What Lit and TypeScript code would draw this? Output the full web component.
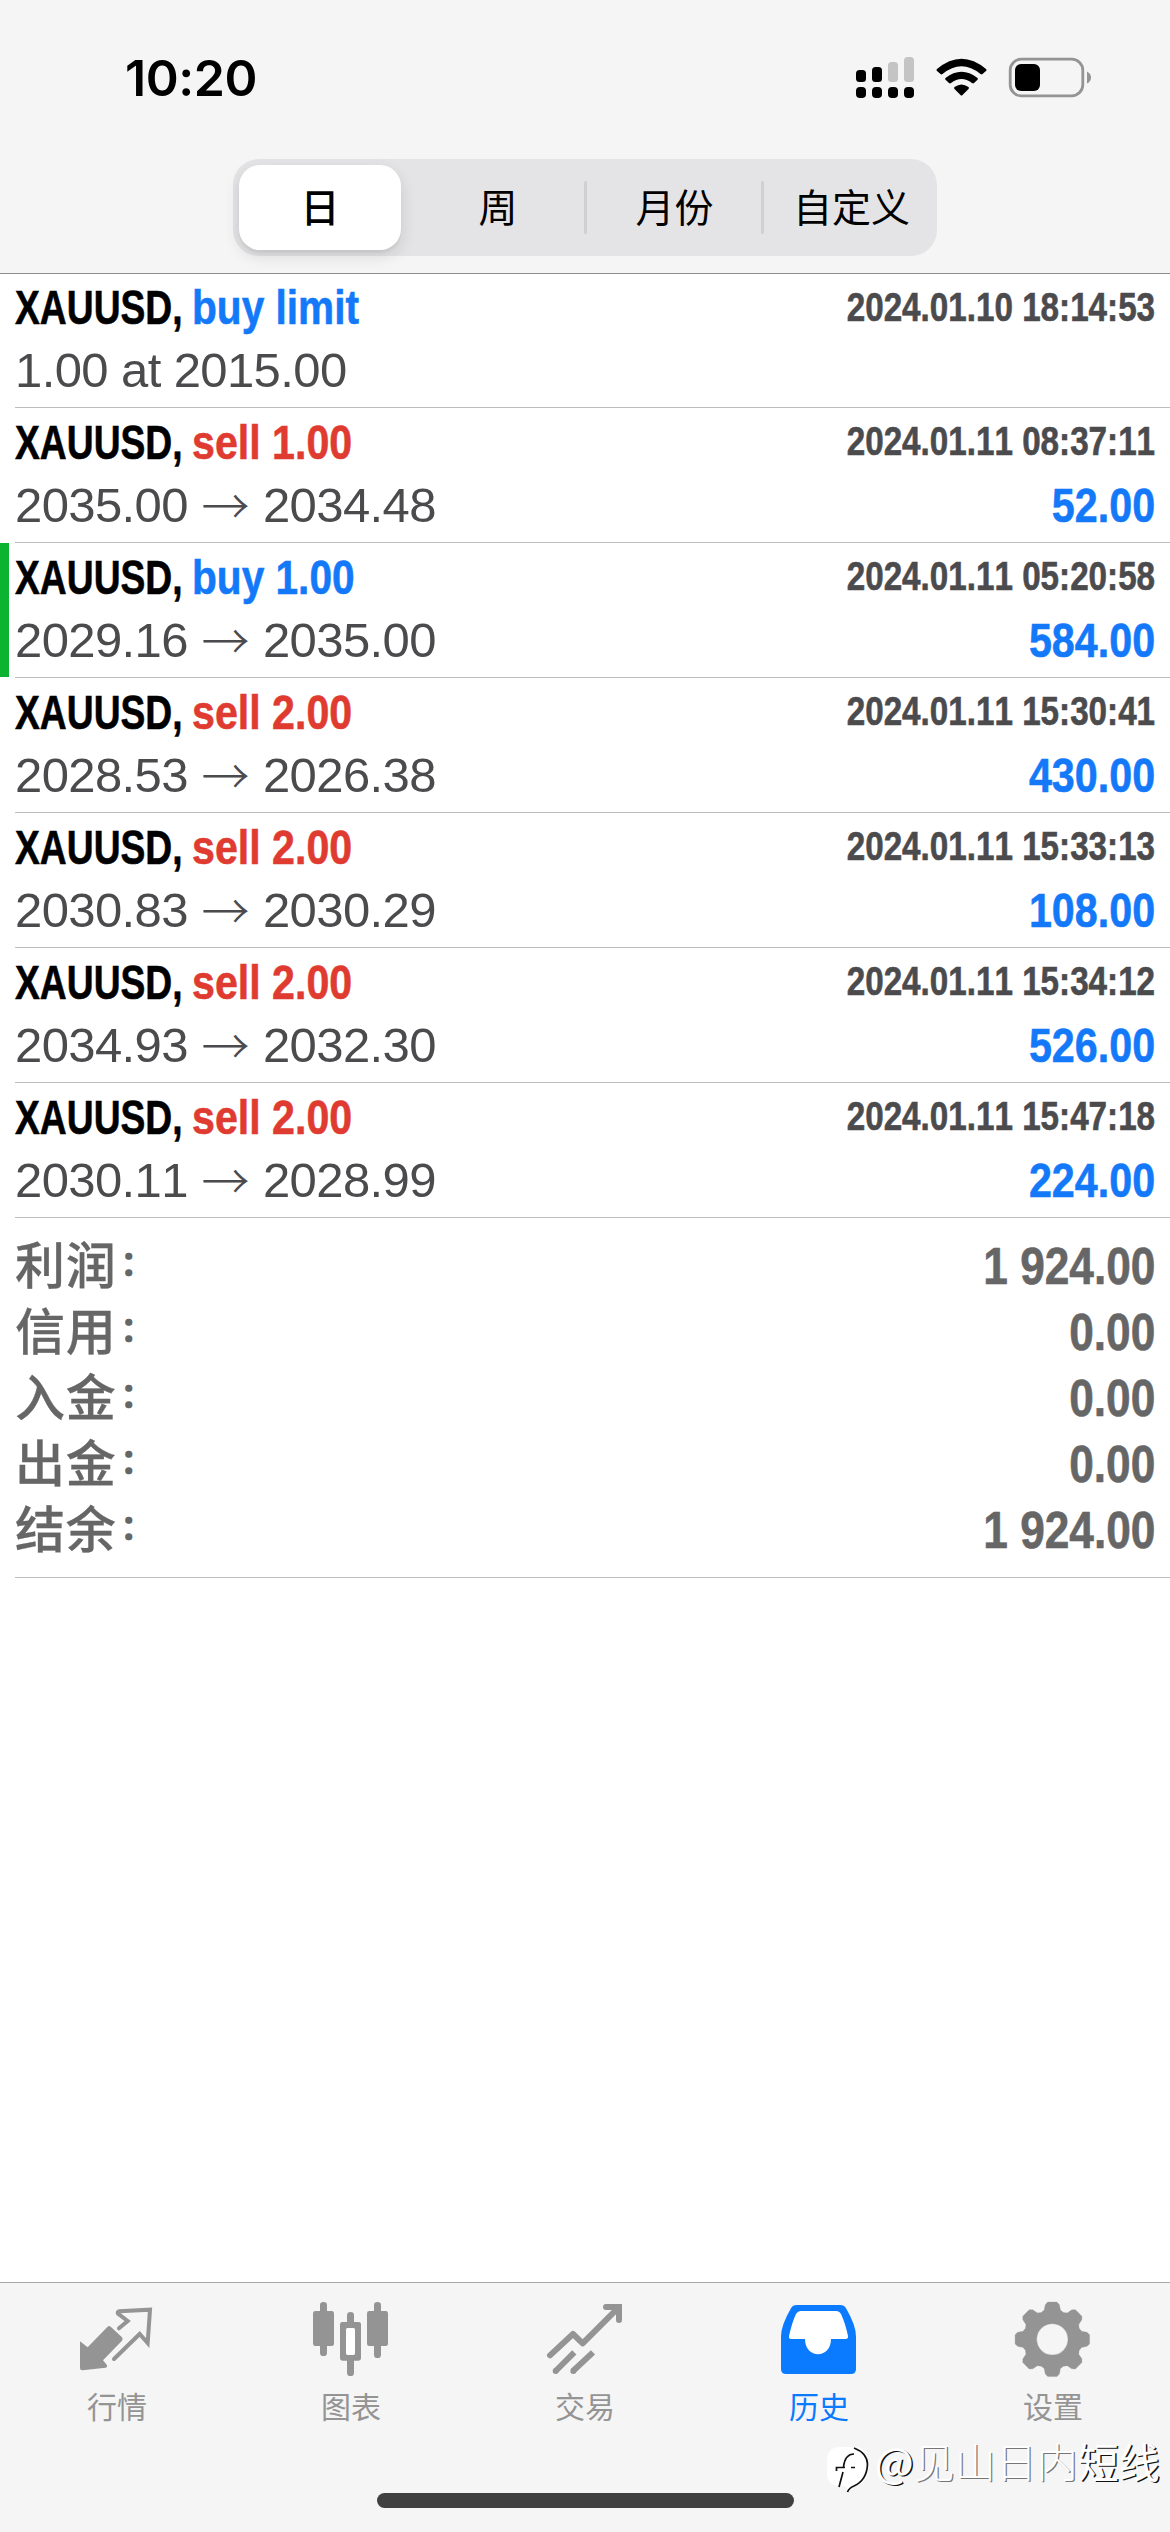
import { LitElement, html, css, svg, nothing } from "lit";
import { customElement } from "lit/decorators.js";
import { classMap } from "lit/directives/class-map.js";

interface Deal {
  side: "buy" | "sell";
  action: string;
  detail: string[];
  time: string;
  profit?: string;
  marked?: boolean;
}

const DEALS: Deal[] = [
  { side: "buy", action: "buy limit", detail: ["1.00 at 2015.00"], time: "2024.01.10 18:14:53" },
  { side: "sell", action: "sell 1.00", detail: ["2035.00", "2034.48"], time: "2024.01.11 08:37:11", profit: "52.00" },
  { side: "buy", action: "buy 1.00", detail: ["2029.16", "2035.00"], time: "2024.01.11 05:20:58", profit: "584.00", marked: true },
  { side: "sell", action: "sell 2.00", detail: ["2028.53", "2026.38"], time: "2024.01.11 15:30:41", profit: "430.00" },
  { side: "sell", action: "sell 2.00", detail: ["2030.83", "2030.29"], time: "2024.01.11 15:33:13", profit: "108.00" },
  { side: "sell", action: "sell 2.00", detail: ["2034.93", "2032.30"], time: "2024.01.11 15:34:12", profit: "526.00" },
  { side: "sell", action: "sell 2.00", detail: ["2030.11", "2028.99"], time: "2024.01.11 15:47:18", profit: "224.00" },
];

const TOTALS: [string, string][] = [
  ["利润", "1 924.00"],
  ["信用", "0.00"],
  ["入金", "0.00"],
  ["出金", "0.00"],
  ["结余", "1 924.00"],
];

const RANGES = ["日", "周", "月份", "自定义"];

const gearPath = (): string => {
  const cx = 757, cy = 238;
  const pts: string[] = [];
  const profile: [number, number][] = [
    [-22.5, 87], [-15.5, 91], [-11.5, 106], [-7, 112.5], [7, 112.5], [11.5, 106], [15.5, 91],
  ];
  for (let i = 0; i < 8; i++) {
    for (const [a, r] of profile) {
      const t = ((i * 45 + a - 90) * Math.PI) / 180;
      pts.push(`${(cx + r * Math.cos(t)).toFixed(1)} ${(cy + r * Math.sin(t)).toFixed(1)}`);
    }
  }
  return `M${pts.join("L")}ZM804 238a47 47 0 1 0 -94 0a47 47 0 1 0 94 0Z`;
};

const TABS = [
  {
    label: "行情",
    box: "105 105 252 252",
    art: svg`
      <path d="M120 244L143 262L202 201Q207 196 212 200L246 232Q250 237 246 242L189 301L200 314Q204 320 197 323L128 331Q120 332 120 324Z" fill="currentColor"/>
      <path d="M237 205L263 183L234 161Q231 156 237 154L330 149L323 249L299 222L222 297" fill="none" stroke="currentColor" stroke-width="12" stroke-linecap="round"/>`,
  },
  {
    label: "图表",
    box: "807 105 252 252",
    art: svg`
      <g fill="currentColor">
        <rect x="840" y="126" width="21" height="162" rx="10"/>
        <rect x="819" y="153" width="63" height="105" rx="7"/>
        <rect x="1002" y="126" width="21" height="168" rx="10"/>
        <rect x="981" y="153" width="63" height="105" rx="7"/>
        <path d="M921 190V166Q921 156 931.500 156Q942 156 942 166V190Z"/>
        <path d="M921 298V338Q921 348 931.500 348Q942 348 942 338V298Z"/>
        <path fill-rule="evenodd" d="M907 186H956Q963 186 963 193V295Q963 302 956 302H907Q900 302 900 295V193Q900 186 907 186ZM925 204Q918 204 918 211V278Q918 285 925 285H938Q945 285 945 278V211Q945 204 938 204Z"/>
      </g>
      <rect x="918" y="204" width="27" height="81" rx="7" fill="#fff"/>`,
  },
  {
    label: "交易",
    box: "129 105 252 252",
    art: svg`
      <g fill="none" stroke="currentColor" stroke-width="18" stroke-linecap="round" stroke-linejoin="round">
        <path d="M150 286L219 222L248 250L350 148"/>
        <path d="M318 141H357V180" stroke-linejoin="miter"/>
      </g>
      <g fill="none" stroke="currentColor" stroke-width="18">
        <path d="M167 333L223 277M219 333L279 277"/>
      </g>
      <circle cx="167" cy="333" r="9" fill="currentColor"/>
      <circle cx="220" cy="333" r="9" fill="currentColor"/>
      <path d="M335 141H357V163Z" fill="currentColor"/>`,
  },
  {
    label: "历史",
    box: "831 105 252 252",
    active: true,
    art: svg`
      <path fill-rule="evenodd" fill="currentColor" d="M889 135H1021Q1032 135 1038 145Q1068 196 1068 230V327Q1068 342 1053 342H858Q843 342 843 327V230Q843 196 873 145Q879 135 889 135Z"/>
      <path fill="#fff" d="M902 153H1008Q1018 153 1023 162Q1036 190 1044 228Q1045 237 1037 237H993C993 298 915 298 915 237H873Q866 237 867 229Q875 190 888 162Q893 153 902 153Z"/>`,
  },
  {
    label: "设置",
    box: "633 105 252 252",
    art: svg`<path fill-rule="evenodd" fill="currentColor" stroke="currentColor" stroke-width="1" stroke-linejoin="round" d=${gearPath()}/>`,
  },
];

@customElement("app-root")
export class AppRoot extends LitElement {
  static styles = css`
    :host {
      display: flex;
      flex-direction: column;
      position: relative;
      width: 1170px;
      height: 2532px;
      overflow: hidden;
      background: #fff;
      font-family: "Liberation Sans", "Noto Sans CJK SC", sans-serif;
      font-kerning: none;
      color: #4b4b4e;
    }
    * { box-sizing: border-box; }
    .header {
      flex: none;
      height: 274px;
      background: #f5f5f5;
      border-bottom: 1px solid #8c8c8e;
      display: flex;
      flex-direction: column;
      align-items: center;
    }
    .status {
      width: 100%;
      height: 159px;
      padding: 0 78px 4px 125px;
      display: flex;
      align-items: center;
      color: #000;
    }
    .clock {
      font: 600 50px/60px Inter, sans-serif;
      letter-spacing: -0.4px;
      margin-right: auto;
    }
    .status svg { display: block; }
    .segments {
      width: 704px;
      height: 97px;
      border-radius: 26px;
      background: #e4e4e6;
      padding: 6px;
      display: grid;
      grid-template-columns: 162px 185px 177px 1fr;
    }
    .segment {
      display: flex;
      align-items: center;
      justify-content: center;
      font: 400 39px/50px "Noto Sans CJK SC", sans-serif;
      color: #000;
      position: relative;
      padding-bottom: 6px;
    }
    .segment.inset { padding-left: 9px; }
    .segment.on {
      background: #fff;
      border-radius: 21px;
      font-weight: 500;
      box-shadow: 0 6px 16px rgba(0, 0, 0, 0.12), 0 3px 2px rgba(0, 0, 0, 0.04);
    }
    .segment.ruled::after {
      content: "";
      position: absolute;
      right: -1px;
      top: 16px;
      width: 3px;
      height: 53px;
      border-radius: 2px;
      background: #d0d0d3;
    }
    .deals { flex: none; }
    .deal {
      height: 135px;
      padding: 0 15px;
      position: relative;
      display: grid;
      grid-template-columns: 1fr auto;
      grid-template-rows: 68px 66px;
    }
    .deal:first-child { height: 134px; grid-template-rows: 67px 66px; }
    .deal:first-child .title { line-height: 67px; }
    .deal::after {
      content: "";
      position: absolute;
      left: 15px;
      right: 0;
      bottom: 0;
      height: 1px;
      background: #bdbdc0;
    }
    .deal.marked::before {
      content: "";
      position: absolute;
      left: 0;
      top: 0;
      bottom: 1px;
      width: 9px;
      background: #0cb330;
    }
    .title {
      display: grid;
      grid-template-columns: 177px auto;
      justify-content: start;
      font-weight: 700;
      font-size: 49px;
      line-height: 68px;
      white-space: nowrap;
    }
    .symbol, .action, .time, .profit, .amount {
      display: block;
      white-space: nowrap;
      -webkit-text-stroke: 0.6px currentColor;
    }
    .symbol { width: 0; color: #000; transform: scaleX(0.76); transform-origin: left; }
    .action { transform-origin: left; }
    .buy .action { color: #1479f8; transform: scaleX(0.829); }
    .sell .action { color: #e03b30; transform: scaleX(0.84); }
    .time {
      font-weight: 700;
      font-size: 40.5px;
      line-height: 66px;
      text-align: right;
      transform: scaleX(0.82);
      transform-origin: right;
    }
    .prices { font-size: 49px; letter-spacing: -0.6px; line-height: 58px; white-space: nowrap; }
    .arrow {
      display: inline-block;
      font: 300 48px/48px "Noto Sans CJK SC", sans-serif;
      letter-spacing: 0;
      margin: 0 13.5px;
      position: relative;
      top: 2px;
    }
    .profit {
      font-weight: 700;
      font-size: 49px;
      line-height: 58px;
      text-align: right;
      color: #1479f8;
      transform: scaleX(0.842);
      transform-origin: right;
    }
    .totals {
      flex: none;
      height: 360px;
      padding: 15px 15px 0;
      position: relative;
      color: #666;
    }
    .totals::after {
      content: "";
      position: absolute;
      left: 15px;
      right: 0;
      bottom: 0;
      height: 1px;
      background: #bdbdc0;
    }
    .total { height: 66px; display: flex; justify-content: space-between; }
    .label {
      font-weight: 500;
      font-size: 50px;
      line-height: 68px;
      letter-spacing: 0.8px;
      -webkit-text-stroke: 0.3px currentColor;
    }
    .colon {
      position: relative;
      top: -9px;
      margin-left: 4px;
      font-size: 33px;
      line-height: 1;
      -webkit-text-stroke: 1.6px currentColor;
    }
    .amount {
      font-weight: 700;
      font-size: 51.5px;
      line-height: 66px;
      transform: scaleX(0.859);
      transform-origin: right;
    }
    .tabs {
      margin-top: auto;
      flex: none;
      height: 250px;
      background: #f5f5f5;
      border-top: 1px solid #a9a9ab;
      display: grid;
      grid-template-columns: repeat(5, 1fr);
      align-items: start;
    }
    .tab {
      display: flex;
      flex-direction: column;
      align-items: center;
      padding-top: 12px;
      color: #949494;
    }
    .tab.active { color: #0a7aff; }
    .tab svg { display: block; width: 84px; height: 84px; }
    .caption { font: 400 30px/40px "Noto Sans CJK SC", sans-serif; margin-top: 6px; }
    .home {
      position: absolute;
      left: 377px;
      bottom: 24px;
      width: 417px;
      height: 15px;
      border-radius: 8px;
      background: #404040;
    }
    .watermark {
      position: absolute;
      left: 826px;
      top: 2440px;
      display: flex;
      align-items: flex-start;
      color: #fff;
    }
    .handle {
      display: flex;
      font: 400 41px/48px "Noto Sans CJK SC", sans-serif;
      margin-top: -4px;
      white-space: nowrap;
    }
    .strong { text-shadow: 1.5px 1px 0 #111; }
    .soft { text-shadow: 1.3px 1px 0 #777; font-weight: 300; }
  `;

  private renderStatus() {
    return html`
      <div class="status">
        <span class="clock">10:20</span>
        <svg width="236" height="44" viewBox="856 56 236 44">
          <rect x="856" y="70" width="10" height="12" rx="3.5"/>
          <rect x="872" y="67" width="10" height="15" rx="3.5"/>
          <g fill="#c4c4c4">
            <rect x="888" y="62" width="10" height="20" rx="3.5"/>
            <rect x="904" y="57" width="10" height="25" rx="3.5"/>
          </g>
          <rect x="856" y="87" width="10" height="11" rx="4"/>
          <rect x="872" y="87" width="10" height="11" rx="4"/>
          <rect x="888" y="87" width="10" height="11" rx="4"/>
          <rect x="904" y="87" width="10" height="11" rx="4"/>
          <path d="M937 69Q961.500 48.500 986 69Q987 70 986 71L982.500 74Q981.500 74.800 980.500 74Q961.500 58.500 942.500 74Q941.500 74.800 940.500 74L937 71Q936 70 937 69Z"/>
          <path d="M945.500 78Q961.500 65.500 977.500 78Q978.300 79 977.500 79.800L974 83Q973 83.800 972 83Q961.500 75 951 83Q950 83.800 949 83L945.500 79.800Q944.700 79 945.500 78Z"/>
          <path d="M954.500 87Q961.500 82 968.500 87Q969.500 88 968.500 89L962.500 95Q961.500 96 960.500 95L954.500 89Q953.500 88 954.500 87Z"/>
          <rect x="1010.200" y="59.200" width="72.600" height="36.600" rx="11" fill="none" stroke="#949494" stroke-width="2.800"/>
          <rect x="1015" y="64" width="25" height="27" rx="6"/>
          <path d="M1087 71.500Q1091 73.500 1091 77.500Q1091 81.500 1087 83.500Z" fill="#949494"/>
        </svg>
      </div>`;
  }

  private renderDeal(d: Deal) {
    return html`
      <div class=${classMap({ deal: true, [d.side]: true, marked: !!d.marked })}>
        <div class="title"><span class="symbol">XAUUSD,</span><span class="action">${d.action}</span></div>
        <span class="time">${d.time}</span>
        <div class="prices">${d.detail[0]}${d.detail[1]
          ? html`<span class="arrow">→</span>${d.detail[1]}`
          : nothing}</div>
        ${d.profit ? html`<span class="profit">${d.profit}</span>` : nothing}
      </div>`;
  }

  render() {
    return html`
      <div class="header">
        ${this.renderStatus()}
        <div class="segments">
          ${RANGES.map((r, i) => html`
            <div class=${classMap({ segment: true, on: i === 0, inset: i === 1 || i === 3, ruled: i === 1 || i === 2 })}>${r}</div>`)}
        </div>
      </div>
      <div class="deals">${DEALS.map((d) => this.renderDeal(d))}</div>
      <div class="totals">
        ${TOTALS.map(([k, v]) => html`
          <div class="total">
            <span class="label">${k}<span class="colon">：</span></span>
            <span class="amount">${v}</span>
          </div>`)}
      </div>
      <div class="tabs">
        ${TABS.map((t) => html`
          <div class=${classMap({ tab: true, active: !!t.active })}>
            <svg viewBox=${t.box}>${t.art}</svg>
            <span class="caption">${t.label}</span>
          </div>`)}
      </div>
      <div class="home"></div>
      <div class="watermark">
        <svg width="49" height="56" viewBox="826 2440 49 56">
          <path fill="#fff" d="M840 2447H854Q868 2447 868 2461V2470Q868 2482 856 2486L848 2492L846 2486H840Q827 2486 827 2472V2461Q827 2447 840 2447Z"/>
          <path fill="none" stroke="#111" stroke-width="1.700" d="M854 2448Q867 2453 867.500 2464Q867 2480 854 2486Q849 2488 847.500 2492M854 2454Q845 2454 843.500 2467M843 2472L839 2487M836.500 2471V2467.500H845M851 2467.500H855"/>
        </svg>
        <span class="handle"><span class="strong">@</span><span class="soft">见山日内</span><span class="strong">短线</span></span>
      </div>`;
  }
}
